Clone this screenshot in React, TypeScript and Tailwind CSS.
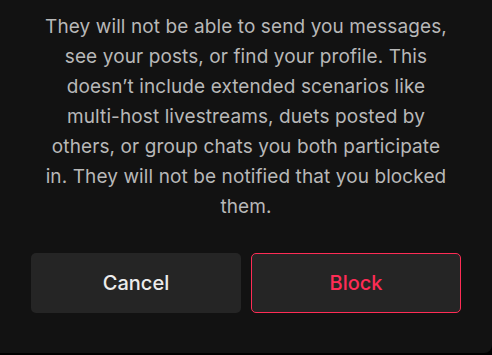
import React from 'react';

const lines = [
  'They will not be able to send you messages,',
  'see your posts, or find your profile. This',
  'doesn’t include extended scenarios like',
  'multi-host livestreams, duets posted by',
  'others, or group chats you both participate',
  'in. They will not be notified that you blocked',
  'them.',
];

export default function App() {
  return (
    <div className="w-[492px] h-[355px] bg-black overflow-hidden" style={{ fontFamily: 'Inter, "Noto Sans", sans-serif' }}>
      <div className="h-[353px] bg-[#121212] rounded-br-[8px] flex flex-col items-center">
        <p className="mt-[12px] w-full text-center text-[19px] tracking-[0.1px] leading-[30px] text-[#b8b8b8]">
          {lines.map((l, i) => (
            <React.Fragment key={i}>
              {l}
              {i < lines.length - 1 && <br />}
            </React.Fragment>
          ))}
        </p>
        <div className="mt-[31px] flex gap-[10px]">
          <button className="w-[210px] h-[60px] rounded-[5px] bg-[#252525] text-[#ececec] text-[20px] font-medium">
            Cancel
          </button>
          <button className="w-[210px] h-[60px] rounded-[5px] bg-[#252525] border border-[#fe2c55] text-[#fe2c55] text-[20px] font-medium">
            Block
          </button>
        </div>
      </div>
    </div>
  );
}
